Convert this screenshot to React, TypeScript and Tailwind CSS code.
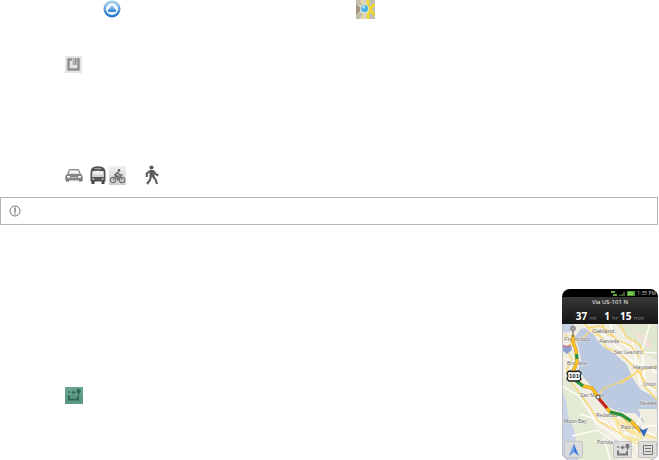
import type { ReactNode } from 'react'

const CITIES = [
  { name: 'Oakland', x: 30, y: 9, size: 6 },
  { name: 'Francisco', x: 2, y: 17, size: 6 },
  { name: 'Alameda', x: 37, y: 19, size: 5 },
  { name: 'San Leandro', x: 52, y: 30, size: 5 },
  { name: 'Hayward', x: 71, y: 45, size: 6 },
  { name: 'Brisbane', x: 5, y: 41, size: 5 },
  { name: 'Union', x: 81, y: 62, size: 5 },
  { name: 'San Mateo', x: 18, y: 73, size: 5 },
  { name: 'Newark', x: 78, y: 81, size: 5 },
  { name: 'Redwood', x: 34, y: 93, size: 5 },
  { name: 'Moon Bay', x: 2, y: 99, size: 5 },
  { name: 'Palo Alto', x: 59, y: 105, size: 5 },
  { name: 'Portola V', x: 35, y: 120, size: 5 },
]

const ROUTE = 'M11 11v7l3 8 1 12-4 10 2 7 8 7 9 2 6 9 12 15 12 3 10 7 9 10'

function NavigationIcon() {
  return (
    <svg viewBox="0 0 18 18" className="size-[18px]" role="img" aria-label="Navigation">
      <defs>
        <linearGradient id="ring" x1="0" y1="0" x2="0" y2="1">
          <stop offset="0" stopColor="#a4cdf0" />
          <stop offset="1" stopColor="#2274cc" />
        </linearGradient>
      </defs>
      <circle cx="9" cy="9" r="7.3" fill="#eef7fe" stroke="url(#ring)" strokeWidth="2.4" />
      <path d="M9 5.5 13 10H5z" fill="#6fb0e8" />
      <path d="M5 9.500h8v2.500H5z" fill="#4389d2" />
    </svg>
  )
}

function MapsIcon() {
  return (
    <svg viewBox="0 0 19 19" className="size-[19px]" role="img" aria-label="Maps">
      <path d="M0 0h19v19H0z" fill="#d8d3c0" />
      <path d="M0 0h6v5H0zM0 13h6v6H0z" fill="#c2bda9" />
      <path d="M0 4l6 5-6 6z" fill="#a49378" />
      <path d="M13 0h6v19h-6z" fill="#c3c0b4" />
      <path d="M12 0v6l2 4-2 4v5M14 9l5-5M14 10l5 5" fill="none" stroke="#eed92c" strokeWidth="2.600" />
      <path d="M5 0l2 4M5 19l3-4" stroke="#e9dba0" strokeWidth="2" />
      <circle cx="8.500" cy="9" r="4.500" fill="#dfe5e4" />
      <circle cx="8.500" cy="8.500" r="3.500" fill="#45ade4" />
      <circle cx="7.500" cy="7" r="1.800" fill="#9bdcf8" />
    </svg>
  )
}

function PlacesIcon() {
  return (
    <svg viewBox="0 0 17 17" className="size-[17px]" role="img" aria-label="Map view">
      <path d="M0 0h17v17H0z" fill="#e6e4e5" />
      <path d="M7 3.500H3.500v10h10v-10H12" fill="none" stroke="#8f8c8d" strokeWidth="2.400" />
      <path d="M7.500 2h3.500v7H7.500z" fill="#b5b2b3" />
      <path d="M10 2h1.500v7H10z" fill="#8f8c8d" />
    </svg>
  )
}

function CarIcon() {
  return (
    <svg viewBox="0 0 18 16" className="h-4 w-[18px]" role="img" aria-label="Driving">
      <path d="M5 2.700h8Q14 2.700 15.200 7.500H2.800Q4 2.700 5 2.700z" fill="#fafafa" stroke="#909090" strokeWidth="1.400" />
      <path d="M2 7h14q1.800 1 1.800 3v3.500H.2V10Q.2 8 2 7z" fill="#858585" />
      <path d="M1 13h3v1.500H1zM14 13h3v1.500h-3z" fill="#707070" />
      <path d="M2 9h3v1.800H2zM13 9h3v1.800h-3z" fill="#f2f2f2" />
      <path d="M6 10.500h6" stroke="#bbb" strokeWidth="1" />
    </svg>
  )
}

function BusIcon() {
  return (
    <svg viewBox="0 0 16 18" className="h-[18px] w-4" role="img" aria-label="Transit">
      <path d="M3 1.200Q8-.6 13 1.200 15.500 2.500 15.500 6v9.500H.5V6Q.5 2.500 3 1.200z" fill="#555257" />
      <path d="M4.500 2h7v1.200h-7z" fill="#a2a1a3" />
      <path d="M2.300 5.200Q8 4.200 13.700 5.200V11H2.300z" fill="#eeeeee" />
      <path d="M2.300 8.500h11.400V11H2.300z" fill="#d2d2d3" />
      <path d="M1.500 15h3v3h-3zM11.500 15h3v3h-3z" fill="#464448" />
      <path d="M2.500 12.300h1.700v1.500H2.500zM11.800 12.300h1.700v1.500h-1.700z" fill="#d5d5d5" />
    </svg>
  )
}

function BikeIcon() {
  return (
    <svg viewBox="0 0 17 19" className="h-[19px] w-[17px]" role="img" aria-label="Bicycling">
      <defs>
        <linearGradient id="tile" x1="0" y1="0" x2="0" y2="1">
          <stop offset="0" stopColor="#f0f0f0" />
          <stop offset="1" stopColor="#cdcdcd" />
        </linearGradient>
      </defs>
      <path d="M0 0h17v19H0z" fill="url(#tile)" />
      <g fill="none" stroke="#757575" strokeWidth="1.200">
        <circle cx="4" cy="14" r="2.700" />
        <circle cx="13" cy="14" r="2.700" />
        <path d="M4 14l2.500-4h5L13 14M6.500 10 9 14l2.500-4" />
      </g>
      <path d="M9 6 6 9l3 2v2.500M8.500 7l3 2h2" fill="none" stroke="#666" strokeWidth="1.500" />
      <circle cx="10" cy="4.500" r="1.400" fill="#666" />
    </svg>
  )
}

function WalkIcon() {
  return (
    <svg viewBox="0 0 14 20" className="h-5 w-[14px]" role="img" aria-label="Walking">
      <circle cx="6.500" cy="2.500" r="2.100" fill="#5c5c5c" />
      <path d="M4.500 5h4.300l1 7H4.500z" fill="#5c5c5c" />
      <path
        d="M5 6 1.800 8.500v3.500M8.500 6l2 3 2.800 1.500M6 11l-1 4-3 4M8 11.500l2.500 3L12 19"
        fill="none"
        stroke="#5c5c5c"
        strokeWidth="2.100"
      />
    </svg>
  )
}

function RouteGlyph() {
  return (
    <g>
      <path d="M4 8.500v4h9V9" fill="none" stroke="currentColor" strokeWidth="2" />
      <path d="M3 5h2M6.500 5.500h4M8.500 3.500v4" stroke="currentColor" strokeWidth="1.300" />
      <circle cx="13.500" cy="4" r="2.200" fill="currentColor" />
      <path d="M12.800 5h1.500v3h-1.500z" fill="currentColor" />
    </g>
  )
}

function MapButton({ label, children }: { label: string; children: ReactNode }) {
  return (
    <button
      type="button"
      aria-label={label}
      className="flex h-[17px] w-[19px] items-center justify-center rounded-xs border border-[#c4c4c4] bg-[#dadada]/90 text-[#777]"
    >
      {children}
    </button>
  )
}

function RouteMap() {
  return (
    <svg viewBox="0 0 96 136" className="block w-full" role="img" aria-label="Route map">
      <path d="M0 0h96v136H0z" fill="#f0ede1" />
      {/* parks and hills */}
      <path d="M54 0h42v36l-12-5-9-11-9-6z" fill="#dfe8ce" />
      <path d="M70 6l12 5 10 12-7 1-9-8z" fill="#f1e2d8" />
      <path d="M0 54l9 4 14 18 9 25 18 16 7 19H10L2 90z" fill="#e3ead3" />
      <path d="M0 68l4 8 2 15 7 18 3 27H0z" fill="#c8d2e6" />
      {/* bay */}
      <path
        d="M19 5l4-1 8 6 9 12 13 8 12 11 5 12 8 12 19 11v9H76l7 15-10-11H61L48 84 38 72 23 55 16 47l3-12-3-13-3-9z"
        fill="#bccae1"
      />
      <path d="M0 0h12L8 8 0 9z" fill="#c8d2e6" />
      {/* minor roads */}
      <path
        d="M26 4l15 6 11 10 18 17 26 12M48 0l5 14 20 14 23 1M70 14l4 22 4 23 18 8M88 0l-8 26 3 30M2 34l14 8M0 62l17 10 18 27 20 14 17 20M18 90l26 8 16 16M10 112l25-6 22 16 35-4M49 98l10 12 21-4 16 7M60 88l17 15 19-2M42 114l6 22M80 90l-8 18 4 20"
        fill="none"
        stroke="#fffdf6"
        strokeWidth="1.500"
      />
      {/* highways */}
      <path
        d="M23 0l3 4 8 4 6 6 4 10 13 5 9 8 10 10 8 12 12 7M26 4l12-2 9 5 8 9 14 6 8 11M40 0l4 9 8 4M58 0l6 12 14 9 4 9M3 10l6 8 10-2 9-9M0 26l9-6M58 60l15-10 5-6M78 46l18-3M78 46l4 16 14 15M77 47L58 58l-16 6-6 8M4 25l6 10-5 10 2 9 9 13 12 16 8 14 15 8 22 14 20 8M58 91l10 10 15 9 13 5M48 86l9 14 12 9"
        fill="none"
        stroke="#f9d56b"
        strokeWidth="1.300"
      />
      <path d="M50 94l12 5 10 11 16 2M54 99l7 13 16 4M28 6l10 3M31 3l3 9M64 99l16 16" fill="none" stroke="#fbe79c" strokeWidth="2" />
      <path d="M60 122l14-6 8 12 14 2M84 128l4-16" fill="none" stroke="#fbe79c" strokeWidth="1" />
      {/* labels */}
      <g
        fontFamily='"Liberation Sans", sans-serif'
        fill="#6d6d72"
        stroke="#f7f7f4"
        strokeWidth="1"
        strokeOpacity="0.6"
        paintOrder="stroke"
      >
        {CITIES.map(({ name, x, y, size }) => (
          <text key={name} x={x} y={y} fontSize={size}>
            {name}
          </text>
        ))}
      </g>
      {/* traffic */}
      <g fill="none" strokeLinejoin="round">
        <path d={ROUTE} stroke="#c19331" strokeWidth="3.400" />
        <path d={ROUTE} stroke="#fbc21f" strokeWidth="2.400" />
        <path d="M14.500 30l.5 5M14 57l7 5M48 88l12 3 9 6" stroke="#259344" strokeWidth="3" />
        <path d="M37 75l8 9" stroke="#c41f2b" strokeWidth="3" />
      </g>
      <path d="M11 6v7" stroke="#666" strokeWidth="1.200" />
      <circle cx="11" cy="4.500" r="2.300" fill="#aaa" stroke="#777" />
      <circle cx="36" cy="73" r="2" fill="#eee" stroke="#594141" />
      <path d="M77 104l4 2 5-2-4 9z" fill="#3567c4" />
      {/* road shields */}
      <path d="M1 21l4 1 4-1 1 5-5 4-4-3z" fill="#8da0d0" />
      <path d="M1 21l4 1 4-1v2H1z" fill="#d37389" />
      <path d="M7 47q5 1 10 0l2 2-1 3 1 3-2 2H7l-2-2 1-3-1-3z" fill="#fff" stroke="#222" strokeWidth="1.300" />
      <text x="12" y="54" textAnchor="middle" fontSize="6" fontWeight="700" fontFamily='"Liberation Sans", sans-serif' fill="#111">
        101
      </text>
      <path d="M.5 0v136M95.500 0v136" stroke="#c4c4c4" />
    </svg>
  )
}

function Phone() {
  return (
    <section className="w-24 overflow-hidden rounded-lg bg-black font-['Open_Sans',sans-serif] text-white">
      <div className="flex h-2 items-center justify-end gap-px pr-0.5 text-[5px] leading-none text-[#ccc]">
        <svg viewBox="0 0 26 7" className="h-[7px] w-[26px]" aria-hidden="true">
          <path d="M1 1h4v2H1zM3 4h4v2H3z" fill="#64a845" />
          <path d="M10 6V5M12 6V4M14 6V2" stroke="#72b957" strokeWidth="1" />
          <path d="M17 1h8v5h-8z" fill="#4c9e39" />
          <path d="M18 2h5v3h-5z" fill="#81cc58" />
        </svg>
        <span>1:35 PM</span>
      </div>
      <header className="bg-linear-to-b from-[#383838] to-[#151515] text-center">
        <h2 className="h-[11px] text-[6px] leading-[11px]">Via US-101 N</h2>
        <p className="flex h-4 items-baseline justify-center gap-0.5 text-[10px] leading-4 font-bold">
          37<span className="mr-1.5 text-[6px] font-normal text-[#888]">mi</span>
          1<span className="text-[6px] font-normal text-[#888]">hr</span>
          15<span className="text-[6px] font-normal text-[#888]">min</span>
        </p>
      </header>
      <div className="relative">
        <RouteMap />
        <div className="absolute inset-x-0 bottom-0 flex gap-1.5 pr-px pb-0.5 pl-0.5">
          <MapButton label="My location">
            <svg viewBox="0 0 12 14" className="h-3.5 w-3">
              <path d="M6 1l5 12-5-4-5 4z" fill="#3c78d0" />
              <path d="M6 1v8l-5 4z" fill="#6ba2e5" />
            </svg>
          </MapButton>
          <div className="grow" />
          <MapButton label="Route overview">
            <svg viewBox="0 0 17 16" className="h-4 w-[17px] shrink-0">
              <RouteGlyph />
            </svg>
          </MapButton>
          <MapButton label="Directions list">
            <svg viewBox="0 0 12 12" className="size-3">
              <path d="M1.500 1.500h9v9h-9zM3 4.500h6M3 7.500h6" fill="none" stroke="currentColor" strokeWidth="1" />
            </svg>
          </MapButton>
        </div>
      </div>
    </section>
  )
}

export default function App() {
  return (
    <main className="bg-white pr-px font-['Liberation_Sans',sans-serif]">
      <div className="flex h-14 gap-[235px] pl-[103px]">
        <NavigationIcon />
        <MapsIcon />
      </div>
      <div className="h-[109px] pl-[65px]">
        <PlacesIcon />
      </div>
      <div className="flex h-8 items-start pl-[65px]">
        <div className="flex h-5 items-center">
          <CarIcon />
          <div className="ml-[7px] mr-[3px]">
            <BusIcon />
          </div>
          <BikeIcon />
          <div className="ml-[19px]">
            <WalkIcon />
          </div>
        </div>
      </div>
      <div className="flex h-7 items-center border border-[#b5b5b5] pl-2">
        <svg viewBox="0 0 12 12" className="size-3" role="img" aria-label="Note">
          <circle cx="6" cy="6" r="5" fill="none" stroke="#666" strokeWidth="0.900" />
          <path d="M6 2.500v5M6 8.300v1.200" stroke="#444" strokeWidth="1" />
        </svg>
      </div>
      <div className="flex items-start justify-between pt-16 pl-[65px]">
        <svg viewBox="0 0 18 17" className="mt-[98px] h-[17px] w-[18px] text-[#35665a]" role="img" aria-label="Route overview">
          <path d="M0 0h18v17H0z" fill="#5b9a82" />
          <path d="M0 0h18v8H0z" fill="#69a58e" />
          <RouteGlyph />
        </svg>
        <Phone />
      </div>
    </main>
  )
}
